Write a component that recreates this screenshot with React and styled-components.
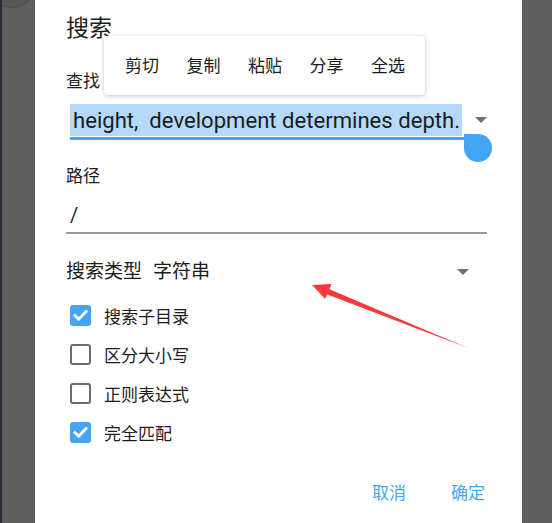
import React from "react";
import styled, { createGlobalStyle } from "styled-components";

const Global = createGlobalStyle`
  html, body { margin: 0; padding: 0; background: #5f5f5f; }
  body { font-family: Roboto, "Noto Sans CJK SC", sans-serif; }
  #root { width: 552px; height: 523px; overflow: hidden; }
`;

const Screen = styled.div`
  position: relative;
  width: 552px;
  height: 523px;
  background: #5f5f5f;
  border-left: 2px solid #2c2a33;
  box-sizing: border-box;
  display: flex;
  overflow: hidden;
`;

const Knob = styled.div`
  position: absolute;
  left: -14px;
  top: -40px;
  width: 46px;
  height: 46px;
  border-radius: 50%;
  background: #585858;
  border: 1px solid #4c4c4c;
`;

const Dialog = styled.div`
  position: relative;
  margin-left: 33px;
  width: 487px;
  background: #ffffff;
  padding: 14px 37px 0 31px;
  box-sizing: border-box;
  display: flex;
  flex-direction: column;
  color: #1c1c1c;
`;

const Title = styled.div`
  font-size: 23px;
  line-height: 30px;
  height: 30px;
`;

const Label = styled.div`
  font-size: 17px;
  line-height: 24px;
  height: 24px;
  margin-top: ${(p) => p.$mt}px;
`;

const FieldRow = styled.div`
  position: relative;
  margin-top: ${(p) => p.$mt}px;
  display: flex;
  flex-direction: column;
`;

const FieldLine = styled.div`
  display: flex;
  align-items: center;
  padding-left: 4px;
  height: ${(p) => p.$h}px;
`;

const Selected = styled.span`
  background: #b4d9fb;
  font-size: 22.1px;
  line-height: 32px;
  height: 32px;
  padding: 0 2px 0 3px;
  white-space: nowrap;
`;

const Plain = styled.span`
  font-size: 20px;
  line-height: 24px;
`;

const Underline = styled.div`
  margin-top: ${(p) => p.$mt}px;
  margin-left: ${(p) => p.$ml}px;
  width: ${(p) => p.$w}px;
  height: ${(p) => p.$h}px;
  background: ${(p) => p.$c};
`;

const Caret = styled.div`
  position: absolute;
  left: ${(p) => p.$x}px;
  top: ${(p) => p.$y}px;
  width: 0;
  height: 0;
  border-left: 6px solid transparent;
  border-right: 6px solid transparent;
  border-top: 6px solid #6e6e6e;
`;

const Handle = styled.div`
  position: absolute;
  left: 398px;
  top: 30px;
  width: 28px;
  height: 28px;
  background: #42a5f5;
  border-radius: 0 50% 50% 50%;
`;

const TypeRow = styled.div`
  position: relative;
  margin-top: 26px;
  height: 24px;
  line-height: 24px;
  font-size: 19px;
  display: flex;
  gap: 11px;
`;

const Checks = styled.div`
  margin-top: 12px;
  display: flex;
  flex-direction: column;
`;

const CheckRow = styled.div`
  height: 39px;
  display: flex;
  align-items: center;
  padding-left: 4px;
  gap: 13px;
  font-size: 17px;
`;

const Box = styled.div`
  width: 21px;
  height: 21px;
  box-sizing: border-box;
  border-radius: 3px;
  border: 2.5px solid ${(p) => (p.$on ? "#42a5f5" : "#6b6b6b")};
  background: ${(p) => (p.$on ? "#42a5f5" : "#fff")};
  display: flex;
  align-items: center;
  justify-content: center;
`;

const Actions = styled.div`
  margin-top: 29px;
  display: flex;
  justify-content: flex-end;
  gap: 45px;
`;

const Action = styled.div`
  font-size: 17px;
  line-height: 24px;
  color: #45a5f3;
`;

const Popup = styled.div`
  position: absolute;
  left: 69px;
  top: 36px;
  width: 321px;
  height: 59px;
  box-sizing: border-box;
  background: #fff;
  border-radius: 3px;
  box-shadow: 0 1px 4px rgba(0, 0, 0, 0.22), 0 0 1px rgba(0, 0, 0, 0.12);
  display: flex;
  align-items: center;
  padding: 0 0 0 21px;
  gap: 27.5px;
  font-size: 17px;
  color: #1c1c1c;
  white-space: nowrap;
`;

const MenuItem = styled.span`
  line-height: 24px;
  flex-shrink: 0;
`;

const ArrowSvg = styled.svg`
  position: absolute;
  left: 0;
  top: 0;
  pointer-events: none;
`;

const checks = [
  { label: "搜索子目录", on: true },
  { label: "区分大小写", on: false },
  { label: "正则表达式", on: false },
  { label: "完全匹配", on: true },
];

const CheckMark = () => (
  <svg width="15" height="15" viewBox="0 0 15 15">
    <path d="M2 7.6 L5.7 11.2 L13 3.6" fill="none" stroke="#fff" strokeWidth="2.8" strokeLinecap="square" />
  </svg>
);

export default function App() {
  return (
    <>
      <Global />
      <Screen>
        <Knob />
        <Dialog>
          <Title>搜索</Title>
          <Label $mt={25}>查找</Label>
          <FieldRow $mt={11}>
            <FieldLine $h={32}>
              <Selected>height,&nbsp; development determines depth.</Selected>
            </FieldLine>
            <Underline $mt={1} $ml={4} $w={404} $h={3} $c="#42a5f5" />
            <Caret $x={409} $y={13} />
            <Handle />
          </FieldRow>
          <Label $mt={24}>路径</Label>
          <FieldRow $mt={15}>
            <FieldLine $h={24}>
              <Plain>/</Plain>
            </FieldLine>
            <Underline $mt={5} $ml={0} $w={421} $h={2} $c="#9a9a9a" />
          </FieldRow>
          <TypeRow>
            <span>搜索类型</span>
            <span>字符串</span>
            <Caret $x={391} $y={9} />
          </TypeRow>
          <Checks>
            {checks.map((c) => (
              <CheckRow key={c.label}>
                <Box $on={c.on}>{c.on && <CheckMark />}</Box>
                <span>{c.label}</span>
              </CheckRow>
            ))}
          </Checks>
          <Actions>
            <Action>取消</Action>
            <Action>确定</Action>
          </Actions>
          <Popup>
            <MenuItem>剪切</MenuItem>
            <MenuItem>复制</MenuItem>
            <MenuItem>粘贴</MenuItem>
            <MenuItem>分享</MenuItem>
            <MenuItem>全选</MenuItem>
          </Popup>
        </Dialog>
        <ArrowSvg width="552" height="523" viewBox="0 0 552 523">
          <polygon
            points="310,285 329.6,284 327.4,289.2 466,348 325.2,294.4 323.2,299"
            fill="#f83a3a"
          />
        </ArrowSvg>
      </Screen>
    </>
  );
}
